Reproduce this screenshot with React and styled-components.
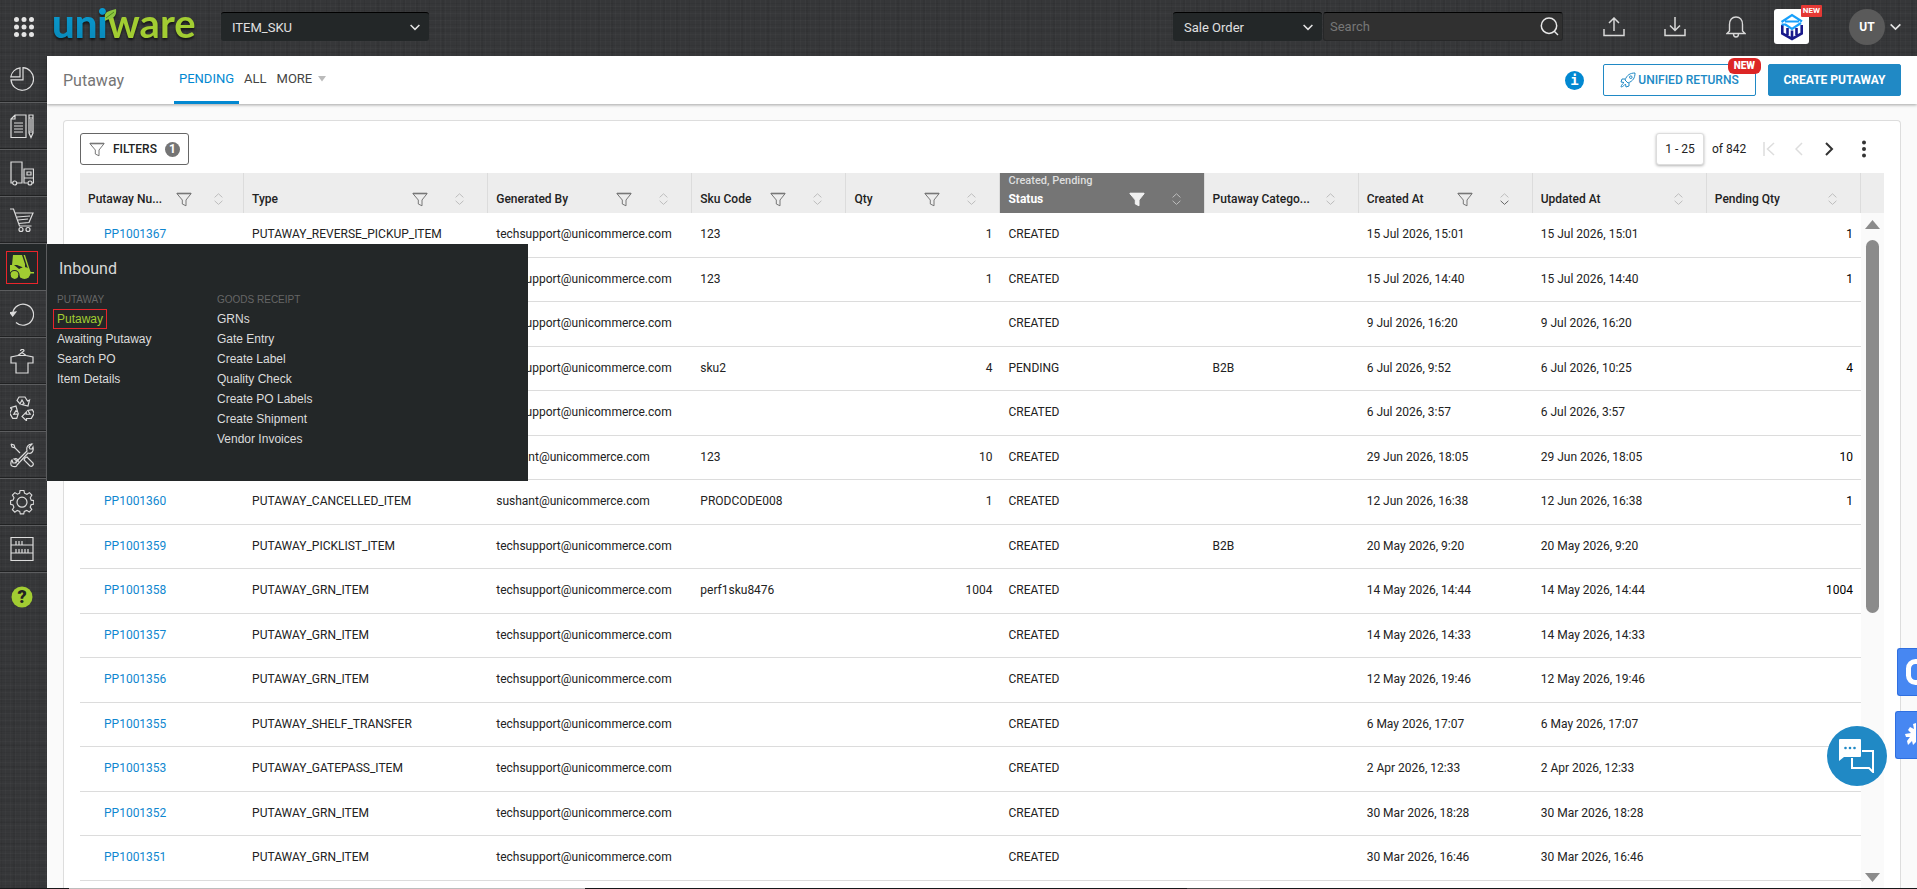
import styled, { createGlobalStyle, css } from "styled-components";

const GlobalStyle = createGlobalStyle`
  * {
    box-sizing: border-box;
  }

  body {
    margin: 0;
    overflow: hidden;
    font-family: Roboto, "Liberation Sans", sans-serif;
    font-size: 12px;
    color: #222;
    background-color: #37383a;
  }

  button, input, select {
    font-family: inherit;
    margin: 0;
  }

  a {
    text-decoration: none;
  }
`;

const AppStyled = styled.div`
  height: 100vh;
  display: flex;
  flex-direction: column;
  background-color: #363739;
  background-image: repeating-linear-gradient(0deg, rgba(255, 255, 255, 0.02) 0 1px, transparent 1px 3px, rgba(0, 0, 0, 0.05) 3px 4px, transparent 4px 7px),
    repeating-linear-gradient(0deg, rgba(0, 0, 0, 0.04) 0 2px, transparent 2px 11px),
    repeating-linear-gradient(90deg, rgba(255, 255, 255, 0.02) 0 1px, transparent 1px 5px),
    repeating-linear-gradient(90deg, rgba(0, 0, 0, 0.05) 0 2px, transparent 2px 13px);
`;

const TopBar = styled.header`
  flex: none;
  height: 56px;
  padding: 0 16px 3px 10px;
  display: flex;
  align-items: center;
`;

const IconButton = styled.button`
  width: ${(props) => props.$width || 30}px;
  height: ${(props) => props.$height || 32}px;
  padding: 0;
  border: none;
  background: none;
  color: ${(props) => props.$color || "#d8d8d8"};
  display: flex;
  align-items: center;
  justify-content: center;

  & svg {
    flex: none;
  }
`;

const Logo = styled.a`
  width: 148px;
  height: 50px;
  margin: 0 20px 0 15px;
`;

const SelectBox = styled.div`
  width: ${(props) => props.$width}px;
  height: 29px;
  display: grid;
  align-items: center;

  & select {
    grid-area: 1 / 1;
    width: 100%;
    height: 29px;
    padding: 0 32px 0 11px;
    appearance: none;
    border: none;
    border-top: 1px solid #000;
    border-radius: 3px;
    background-color: #232728;
    color: #e0e0e0;
    font-size: 13px;
  }

  & svg {
    grid-area: 1 / 1;
    justify-self: end;
    margin-right: 9px;
    pointer-events: none;
  }
`;

const SearchGroup = styled.form`
  margin-left: auto;
  display: flex;
  gap: 1px;
`;

const SearchBox = styled.div`
  width: 240px;
  height: 29px;
  display: flex;
  align-items: center;
  border: 1px solid #262728;
  border-top-color: #000;
  border-radius: 3px;
  background-color: #303030;

  & input {
    flex: 1;
    min-width: 0;
    padding: 0 6px;
    border: none;
    outline: none;
    background: none;
    color: #e0e0e0;
    font-size: 13px;
  }

  & input::placeholder {
    color: #777;
    opacity: 1;
  }
`;

const TopActions = styled.div`
  margin-left: 36px;
  display: flex;
  align-items: center;
  gap: 31px;
`;

const AppTile = styled.button`
  position: relative;
  width: 35px;
  height: 35px;
  margin-left: -8px;
  padding: 0;
  border: none;
  border-radius: 3px;
  background-color: #fff;
  display: grid;
  place-items: center;
`;

const TileBadge = styled.span`
  position: absolute;
  top: -4px;
  right: -13px;
  padding: 0 2px;
  border-radius: 1px;
  background-color: #e53935;
  color: #fff;
  font-size: 8px;
  font-weight: 700;
  line-height: 12px;
`;

const UserMenu = styled.button`
  margin-left: 9px;
  padding: 0;
  border: none;
  background: none;
  display: flex;
  align-items: center;
  gap: 5px;
  color: #e8e8e8;

  & span {
    width: 36px;
    border-radius: 50%;
    background-color: #5a5a5a;
    color: #fff;
    font-size: 12px;
    font-weight: 700;
    line-height: 36px;
  }
`;

const Body = styled.div`
  flex: 1;
  min-height: 0;
  display: flex;
`;

const SideBar = styled.nav`
  flex: none;
  width: 47px;
`;

const SideItem = styled.div`
  position: relative;
  height: 47px;
  padding-right: 4px;
  border-bottom: ${(props) => (props.$last ? "none" : "1px solid #5c5d5f")};
  box-shadow: ${(props) => (props.$last ? "none" : "inset 0 -1px 0 #202122")};
  display: flex;
  align-items: center;
  justify-content: center;

  ${(props) =>
    props.$active &&
    css`
      background-color: #232728;
      box-shadow: none;
      z-index: 2;
    `}
`;

const SideLink = styled.a`
  width: 32px;
  height: 33px;
  border: 1px solid ${(props) => (props.$active ? "#e8252b" : "transparent")};
  color: ${(props) => (props.$active ? "#a2cd32" : "#dcdcdc")};
  display: grid;
  place-items: center;
`;

const Flyout = styled.div`
  position: absolute;
  top: 0;
  left: 46px;
  width: 482px;
  height: 237px;
  padding: 15px 10px;
  border-left: 1px solid #5c5d5f;
  background-color: #232728;
  color: #d8d8d8;

  & h2 {
    margin: 0 2px 11px;
    font-size: 16px;
    font-weight: 400;
    line-height: 20px;
  }
`;

const FlyoutColumns = styled.div`
  display: grid;
  grid-template-columns: 160px 160px;
`;

const FlyoutColumn = styled.div`
  font-family: "Liberation Sans", Arial, sans-serif;

  & h3 {
    margin: 0;
    color: #666;
    font-size: 10px;
    font-weight: 400;
    line-height: 19px;
  }

  & ul {
    margin: 0;
    padding: 0;
    list-style: none;
  }
`;

const FlyoutLink = styled.a`
  display: block;
  width: fit-content;
  height: 20px;
  margin-left: -4px;
  padding: 0 3px;
  border: 1px solid ${(props) => (props.$active ? "#e8252b" : "transparent")};
  color: ${(props) => (props.$active ? "#a2cd32" : "#dcdcdc")};
  font-size: 12px;
  line-height: 18px;
`;

const Main = styled.main`
  flex: 1;
  min-width: 0;
  display: flex;
  flex-direction: column;
  background-color: #fafafa;
`;

const SubHeader = styled.div`
  flex: none;
  height: 48px;
  padding: 0 16px;
  background-color: #fff;
  box-shadow: 0 1px 3px rgba(0, 0, 0, 0.35);
  display: flex;
  align-items: center;

  & h1 {
    width: 111px;
    margin: 0;
    color: #757575;
    font-size: 16px;
    font-weight: 400;
  }
`;

const Tabs = styled.div`
  flex: 1;
  align-self: stretch;
  display: flex;
`;

const Tab = styled.button`
  padding: 0 5px;
  border: none;
  border-bottom: 3px solid ${(props) => (props.$active ? "#0288d1" : "transparent")};
  background: none;
  color: ${(props) => (props.$active ? "#0288d1" : "#444")};
  font-size: 13px;
  display: flex;
  align-items: center;
  gap: 6px;
`;

const HeaderActions = styled.div`
  display: flex;
  align-items: center;
  gap: 12px;
`;

const InfoButton = styled.button`
  width: 19px;
  height: 19px;
  margin-right: 7px;
  padding: 0;
  border: none;
  border-radius: 50%;
  background-color: #0288d1;
  color: #fff;
  font-family: "DejaVu Sans Mono", monospace;
  font-size: 14px;
  font-weight: 700;
  line-height: 19px;
`;

const ActionButton = styled.button`
  position: relative;
  min-width: ${(props) => (props.$primary ? 133 : 153)}px;
  height: 32px;
  padding: 0 14px;
  border: 1px solid #2089c5;
  border-radius: 2px;
  background-color: ${(props) => (props.$primary ? "#2089c5" : "#fff")};
  color: ${(props) => (props.$primary ? "#fff" : "#2089c5")};
  font-size: 12px;
  font-weight: ${(props) => (props.$primary ? 700 : 500)};
  white-space: nowrap;
  display: flex;
  align-items: center;
  justify-content: center;
  gap: 2px;
`;

const NewBadge = styled.span`
  position: absolute;
  top: -7px;
  right: -6px;
  padding: 0 6px;
  border-radius: 6px;
  background-color: #dc2626;
  color: #fff;
  font-size: 10px;
  font-weight: 900;
  line-height: 16px;
`;

const Card = styled.section`
  flex: 1;
  min-height: 0;
  margin: 16px 16px 0;
  padding: 12px 16px 0;
  border: 1px solid #ddd;
  border-bottom: none;
  border-radius: 4px 4px 0 0;
  background-color: #fff;
  display: flex;
  flex-direction: column;
`;

const Toolbar = styled.div`
  flex: none;
  height: 40px;
  display: flex;
  align-items: flex-start;
  justify-content: space-between;
`;

const FilterButton = styled.button`
  height: 32px;
  padding: 0 8px;
  border: 1px solid #666;
  border-radius: 3px;
  background-color: #fff;
  color: #222;
  font-size: 12px;
  font-weight: 500;
  display: flex;
  align-items: center;
  gap: 8px;

  & b {
    width: 15px;
    border-radius: 50%;
    background-color: #757575;
    color: #fff;
    line-height: 15px;
  }
`;

const Pager = styled.div`
  display: flex;
  align-items: center;
`;

const RangeButton = styled.button`
  width: 48px;
  height: 32px;
  margin-right: 8px;
  padding: 0;
  border: 1px solid #ddd;
  border-radius: 3px;
  background-color: #fff;
  color: #222;
  font-size: 12px;
  box-shadow: 0 1px 3px rgba(0, 0, 0, 0.3);
`;

const PageTotal = styled.span`
  width: 42px;
`;

const GridArea = styled.div`
  flex: 1;
  min-height: 0;
  overflow: hidden;
  display: flex;
  align-items: stretch;
`;

const TableArea = styled.div`
  flex: 1;
  min-width: 0;
  overflow: hidden;
`;

const Table = styled.table`
  width: 100%;
  table-layout: fixed;
  border-collapse: separate;
  border-spacing: 0;
`;

const HeadCell = styled.th`
  height: 40px;
  padding: 0 ${(props) => (props.$compact ? 20 : 23)}px 0 8px;
  border-right: 1px solid #dcdcdc;
  background-color: ${(props) => (props.$filtered ? "#757575" : "#ededed")};
  color: ${(props) => (props.$filtered ? "#fff" : "#222")};
  font-weight: ${(props) => (props.$filtered ? 700 : 500)};
  text-align: left;
  white-space: nowrap;
  vertical-align: bottom;

  & small {
    display: block;
    color: #dedede;
    font-size: 11px;
    font-weight: 500;
    line-height: 12px;
  }
`;

const HeadContent = styled.div`
  height: 24px;
  margin-bottom: 2px;
  display: flex;
  align-items: center;

  & span {
    flex: 1;
    min-width: 0;
  }

  & svg {
    flex: none;
    margin-left: ${(props) => (props.$compact ? 22 : 27)}px;
  }

  & svg:first-of-type {
    margin-left: 0;
  }
`;

const Row = styled.tr`
  height: ${(props) => (props.$tall ? 45 : 44)}px;
`;

const Cell = styled.td`
  padding: 0 8px 2px;
  border-bottom: 1px solid #dcdcdc;
  color: ${(props) => (props.$strong ? "#000" : "#222")};
  text-align: ${(props) => (props.$number ? "right" : "left")};
  white-space: nowrap;

  & a {
    padding-left: 16px;
    color: #0f87d0;
  }
`;

const ScrollBar = styled.div`
  flex: none;
  width: 23px;
  padding: 7px 0;
  border-top: 40px solid #ededed;
  background-color: #fafafa;
  display: flex;
  flex-direction: column;
  align-items: center;
`;

const ScrollArrow = styled.div`
  width: 15px;
  height: 9px;
  background-color: #8b8b8b;
  clip-path: ${(props) => (props.$down ? "polygon(0 0, 100% 0, 50% 100%)" : "polygon(50% 0, 100% 100%, 0 100%)")};
`;

const ScrollTrack = styled.div`
  flex: 1;
  width: 13px;
  margin: 11px 0;
`;

const ScrollThumb = styled.div`
  height: 60%;
  border-radius: 7px;
  background-color: #8b8b8b;
`;

const ChatButton = styled.button`
  position: fixed;
  right: 30px;
  bottom: 103px;
  z-index: 3;
  width: 60px;
  height: 60px;
  padding: 0;
  border: none;
  border-radius: 50%;
  background-color: #2089c5;
  display: grid;
  place-items: center;
`;

const EdgeTabs = styled.div`
  position: fixed;
  right: 0;
  bottom: 130px;
  z-index: 3;
  display: flex;
  flex-direction: column;
  align-items: flex-end;
  gap: 15px;
`;

const EdgeTab = styled.button`
  width: ${(props) => props.$width}px;
  height: 48px;
  padding: 0;
  border: 1px solid #2f6fe0;
  border-right: none;
  border-radius: 3px 0 0 3px;
  background-color: #4787f2;
  overflow: hidden;

  & svg {
    display: block;
    margin-left: 8px;
  }
`;

const BottomEdge = styled.div`
  position: fixed;
  left: 0;
  right: 0;
  bottom: 0;
  z-index: 4;
  height: 1px;
  background: linear-gradient(90deg, #17181a 0 69px, #bdbdbd 69px 585px, #17181a 585px 1187px, #484848 1187px 1260px, #17181a 1260px);
`;

const Chevron = ({ size = 10 }) => (
  <svg width={size} height={size} viewBox="0 0 10 10" fill="none" stroke="#e4e4e4" strokeWidth="1.5">
    <path d="M.6 3 5 7.4 9.4 3" />
  </svg>
);

const Funnel = ({ filled }) => (
  <svg width="16" height="15" viewBox="0 0 16 15" fill={filled ? "#f0f0f0" : "none"} stroke={filled ? "#f0f0f0" : "#777"}>
    <path d="M.8 1.5h14.4L10 8v5.8L6.3 12V8z" />
    <path d="M1 1.5h14" strokeWidth="1.6" />
  </svg>
);

const SortIcon = ({ desc }) => (
  <svg width="9" height="12" viewBox="0 0 9 12" fill="none" stroke="#bdbdbd">
    <path d="M.6 4.4 4.5.8l3.9 3.6" />
    <path d="M.6 7.8l3.9 3.6 3.9-3.6" stroke={desc ? "#666" : "#bdbdbd"} />
  </svg>
);

const recycleArrow = "M7 4.500 9 1h6l2.500 4 2-1-1.500 6-6-1.500 2-1-2-3.500-2 4z";

const navIcons = {
  Dashboard: (
    <>
      <path d="M13 .7a11.3 11.3 0 1 1-12 12.2h12z" />
      <path d="M10 .8v9H.8A11 11 0 0 1 10 .8z" />
    </>
  ),
  Orders: (
    <>
      <path d="M5 1h11v22.5H1V5zM5 1v4H1M4 9h9M4 12h9M4 15h9M4 18h9" />
      <path d="M19 1h4v18l-2 4.5-2-4.5zM19 4h4M19 18h4M21 5v12" />
    </>
  ),
  Products: (
    <>
      <path d="M2.500 22H1V1h11v21H7" />
      <circle cx="4.7" cy="22" r="2" />
      <path d="M17.500 22H14V8h9.500v14H22M17 11h4v3h-4zM14 17h9" />
      <circle cx="20" cy="22" r="2" />
    </>
  ),
  Procure: (
    <>
      <path d="M0 1h3.500l6 17h12M4.500 5H23l-4 9.500-10.500 1M7 9l13-1M8 12l10-1" />
      <circle cx="11" cy="21.500" r="2" />
      <circle cx="18" cy="21.500" r="2" />
    </>
  ),
  Inbound: (
    <g fill="currentColor" stroke="none">
      <path d="M3 0h9l3 9v4l-3-1-5-2H2z" />
      <path d="M13.500 0h1.500l5.500 17H24v1.500h-4.500z" />
      <path d="M0 10h4l5 4 5-2 3 5v3H0z" />
      <circle cx="4.500" cy="20" r="4" />
      <circle cx="14.500" cy="18" r="6" />
      <circle cx="4.500" cy="20" r="4.500" fill="none" stroke="#232728" />
    </g>
  ),
  Returns: (
    <>
      <path d="M2.700 11A10.500 10.500 0 1 1 6 20.500" />
      <path d="M0 10.500 2.700 14 5.800 10z" fill="currentColor" />
    </>
  ),
  Inventory: <path d="M8 6.500 1 8v6h5V24h12V14h5V8l-7-1.500-4-3-4 3h8M12 4c0-2 2-1 2-2.500S10.500 0 10.500 2" />,
  Recycle: (
    <>
      <path d={recycleArrow} />
      <path d={recycleArrow} transform="rotate(120 12 13.500)" />
      <path d={recycleArrow} transform="rotate(240 12 13.500)" />
    </>
  ),
  Tools: (
    <>
      <path d="M5 20 17 8c-1-4 1-7 5-7l-3 3 1 2h2l1-2c1 5-2 7-5 6L7 22c0 2-3 2-5 1s-1-5 0-6l1 3h3l1-2-3-2c3-1 5 1 4 3" />
      <path d="M1 1l3 1 1 3 5 5M1 1l1 3 3 1M15 15l2-1 6 6c1 2-1 4-3 3l-6-6z" />
    </>
  ),
  Settings: (
    <>
      <path d="m10 1 4 0 .6 3 2.600 1.100 2.600-1.700 2.600 2.600-1.700 2.800 1 2.500 2.700.5v3.700l-2.800.7-1 2.500 1.700 2.500-2.700 2.600-2.600-1.700-2.600 1-.6 2.700h-3.600l-.6-2.700-2.600-1L4.500 24 1.900 21.300l1.600-2.500-1-2.500L0 15.600v-3.700l2.600-.6 1-2.500L1.900 6l2.600-2.600L7.200 5 9.500 4z" transform="translate(.6 -.6) scale(.95)" />
      <circle cx="12" cy="12.200" r="5" />
    </>
  ),
  Reports: <path d="M1 .5h22v23H1zM1 8h22M1 16h22M6 4v4M9 4v4M12 4v4M6 12v4M9 12v4M12 12v4M15 12v4M18 12v4" />,
};

const inboundMenu = [
  { title: "PUTAWAY", links: ["Putaway", "Awaiting Putaway", "Search PO", "Item Details"] },
  {
    title: "GOODS RECEIPT",
    links: ["GRNs", "Gate Entry", "Create Label", "Quality Check", "Create PO Labels", "Create Shipment", "Vendor Invoices"],
  },
];

const columns = [
  { name: "Putaway Nu...", width: 164, filter: true, compact: true },
  { name: "Type", width: 244, filter: true },
  { name: "Generated By", width: 204, filter: true },
  { name: "Sku Code", width: 154, filter: true },
  { name: "Qty", width: 154, filter: true },
  { name: "Status", width: 204, filter: true, applied: "Created, Pending" },
  { name: "Putaway Catego...", width: 154 },
  { name: "Created At", width: 174, filter: true, desc: true },
  { name: "Updated At", width: 174 },
  { name: "Pending Qty", width: 154 },
];

const tech = "techsupport@unicommerce.com";
const sushant = "sushant@unicommerce.com";

// code, type, generated by, sku, qty, status, category, created, updated, pending qty
const rows = [
  ["PP1001367", "PUTAWAY_REVERSE_PICKUP_ITEM", tech, "123", "1", "CREATED", "", "15 Jul 2026, 15:01", "15 Jul 2026, 15:01", "1"],
  ["PP1001366", "PUTAWAY_REVERSE_PICKUP_ITEM", tech, "123", "1", "CREATED", "", "15 Jul 2026, 14:40", "15 Jul 2026, 14:40", "1"],
  ["PP1001365", "PUTAWAY_GRN_ITEM", tech, "", "", "CREATED", "", "9 Jul 2026, 16:20", "9 Jul 2026, 16:20", ""],
  ["PP1001364", "PUTAWAY_GRN_ITEM", tech, "sku2", "4", "PENDING", "B2B", "6 Jul 2026, 9:52", "6 Jul 2026, 10:25", "4"],
  ["PP1001363", "PUTAWAY_GRN_ITEM", tech, "", "", "CREATED", "", "6 Jul 2026, 3:57", "6 Jul 2026, 3:57", ""],
  ["PP1001361", "PUTAWAY_GRN_ITEM", sushant, "123", "10", "CREATED", "", "29 Jun 2026, 18:05", "29 Jun 2026, 18:05", "10"],
  ["PP1001360", "PUTAWAY_CANCELLED_ITEM", sushant, "PRODCODE008", "1", "CREATED", "", "12 Jun 2026, 16:38", "12 Jun 2026, 16:38", "1"],
  ["PP1001359", "PUTAWAY_PICKLIST_ITEM", tech, "", "", "CREATED", "B2B", "20 May 2026, 9:20", "20 May 2026, 9:20", ""],
  ["PP1001358", "PUTAWAY_GRN_ITEM", tech, "perf1sku8476", "1004", "CREATED", "", "14 May 2026, 14:44", "14 May 2026, 14:44", "1004"],
  ["PP1001357", "PUTAWAY_GRN_ITEM", tech, "", "", "CREATED", "", "14 May 2026, 14:33", "14 May 2026, 14:33", ""],
  ["PP1001356", "PUTAWAY_GRN_ITEM", tech, "", "", "CREATED", "", "12 May 2026, 19:46", "12 May 2026, 19:46", ""],
  ["PP1001355", "PUTAWAY_SHELF_TRANSFER", tech, "", "", "CREATED", "", "6 May 2026, 17:07", "6 May 2026, 17:07", ""],
  ["PP1001353", "PUTAWAY_GATEPASS_ITEM", tech, "", "", "CREATED", "", "2 Apr 2026, 12:33", "2 Apr 2026, 12:33", ""],
  ["PP1001352", "PUTAWAY_GRN_ITEM", tech, "", "", "CREATED", "", "30 Mar 2026, 18:28", "30 Mar 2026, 18:28", ""],
  ["PP1001351", "PUTAWAY_GRN_ITEM", tech, "", "", "CREATED", "", "30 Mar 2026, 16:46", "30 Mar 2026, 16:46", ""],
];

function Header() {
  return (
    <TopBar>
      <IconButton $width={28} aria-label="Apps">
        <svg width="20" height="20" viewBox="0 0 20 20" fill="#e4e4e4">
          {[2.5, 10, 17.5].map((y) => [2.5, 10, 17.5].map((x) => <circle key={`${x}-${y}`} cx={x} cy={y} r="2.5" />))}
        </svg>
      </IconButton>
      <Logo href="#" aria-label="uniware">
        <svg width="148" height="50" viewBox="0 0 148 50">
          <defs>
            <linearGradient id="logoBlue" x1="0" y1="0" x2="0" y2="1">
              <stop offset="0" stopColor="#08a0d8" />
              <stop offset="1" stopColor="#0a86b4" />
            </linearGradient>
          </defs>
          <g fontFamily="Lato, sans-serif" fontSize="40" fontWeight="900" style={{ filter: "drop-shadow(0 2px 1px rgba(0,0,0,.6))" }}>
            <text x="-1" y="36">
              <tspan fill="url(#logoBlue)">uni</tspan>
              <tspan fill="#a2cd32" fontWeight="700">ware</tspan>
            </text>
            <path d="M52 16C51 10 55 9 63 7c1 6-2 9-6 10-3 1-4 1-5 2z" fill="#8cc63f" />
            <path d="M53 16 61 10" stroke="#4f8a1d" fill="none" />
          </g>
        </svg>
      </Logo>
      <SelectBox $width={208}>
        <select aria-label="Facility" defaultValue="ITEM_SKU">
          <option>ITEM_SKU</option>
        </select>
        <Chevron />
      </SelectBox>

      <SearchGroup>
        <SelectBox $width={149}>
          <select aria-label="Search type" defaultValue="Sale Order">
            <option>Sale Order</option>
          </select>
          <Chevron />
        </SelectBox>
        <SearchBox>
          <input type="text" aria-label="Search" placeholder="Search" />
          <IconButton $width={26} $height={26} aria-label="Run search">
            <svg width="19" height="19" viewBox="0 0 19 19" fill="none" stroke="#e8e8e8" strokeWidth="1.500">
              <circle cx="9" cy="8.700" r="7.700" />
              <path d="m14 14 4 4" />
            </svg>
          </IconButton>
        </SearchBox>
      </SearchGroup>

      <TopActions>
        <IconButton aria-label="Imports">
          <svg width="22" height="20" viewBox="0 0 22 20" fill="none" stroke="currentColor" strokeWidth="1.500">
            <path d="M1 12v6.500h20V12M11 14V1M6 6l5-5 5 5" />
          </svg>
        </IconButton>
        <IconButton aria-label="Exports">
          <svg width="22" height="20" viewBox="0 0 22 20" fill="none" stroke="currentColor" strokeWidth="1.500">
            <path d="M1 12v6.500h20V12M11 0v13M6 8.500l5 5 5-5" />
          </svg>
        </IconButton>
        <IconButton aria-label="Notifications">
          <svg width="20" height="22" viewBox="0 0 20 22" fill="none" stroke="currentColor" strokeWidth="1.400">
            <path d="M3.500 15V8.500C3.500 4 6 1 10 1s6.500 3 6.500 7.500V15l2.500 2.500H1zM7.500 18c0 4 5 4 5 0" />
          </svg>
        </IconButton>
        <AppTile aria-label="New apps">
          <svg width="24" height="28" viewBox="0 0 24 28" fill="none" strokeWidth="2.600">
            <path d="M2.300 12v8.500L12 26l9.700-5.500V12M12 26v-8.500M7.500 15v7M16.500 15v7" stroke="#1a1a8c" />
            <path d="M1.500 11.500h4L12 16l9-6M1.500 9 12 2l10 6.500M5 8.500h14" stroke="#18a0fb" strokeWidth="2.200" />
          </svg>
          <TileBadge>NEW</TileBadge>
        </AppTile>
        <UserMenu aria-label="User menu">
          <span>UT</span>
          <Chevron size={11} />
        </UserMenu>
      </TopActions>
    </TopBar>
  );
}

function InboundFlyout() {
  return (
    <Flyout>
      <h2>Inbound</h2>
      <FlyoutColumns>
        {inboundMenu.map((group) => (
          <FlyoutColumn key={group.title}>
            <h3>{group.title}</h3>
            <ul>
              {group.links.map((link) => (
                <li key={link}>
                  <FlyoutLink href="#" $active={link === "Putaway"}>
                    {link}
                  </FlyoutLink>
                </li>
              ))}
            </ul>
          </FlyoutColumn>
        ))}
      </FlyoutColumns>
    </Flyout>
  );
}

function Navigation() {
  return (
    <SideBar>
      {Object.keys(navIcons).map((name) => (
        <SideItem key={name} $active={name === "Inbound"}>
          <SideLink href="#" aria-label={name} $active={name === "Inbound"}>
            <svg width="24" height="25" viewBox="0 0 24 25" fill="none" stroke="currentColor" strokeWidth="1.200">
              {navIcons[name]}
            </svg>
          </SideLink>
          {name === "Inbound" && <InboundFlyout />}
        </SideItem>
      ))}
      <SideItem $last>
        <SideLink href="#" aria-label="Help">
          <svg width="22" height="22" viewBox="0 0 22 22">
            <circle cx="11" cy="11" r="10.500" fill="#a2cd32" />
            <text x="11" y="17" textAnchor="middle" fontFamily="Roboto" fontSize="18" fontWeight="900" fill="#222">
              ?
            </text>
          </svg>
        </SideLink>
      </SideItem>
    </SideBar>
  );
}

function PutawayTable() {
  return (
    <Table>
      <colgroup>
        {columns.map((column) => (
          <col key={column.name} style={{ width: `${(column.width / 1780) * 100}%` }} />
        ))}
      </colgroup>
      <thead>
        <tr>
          {columns.map((column) => (
            <HeadCell key={column.name} $filtered={!!column.applied} $compact={column.compact}>
              {column.applied && <small>{column.applied}</small>}
              <HeadContent $compact={column.compact}>
                <span>{column.name}</span>
                {column.filter && <Funnel filled={!!column.applied} />}
                <SortIcon desc={column.desc} />
              </HeadContent>
            </HeadCell>
          ))}
        </tr>
      </thead>
      <tbody>
        {rows.map((row, index) => (
          <Row key={row[0]} $tall={index % 2 === 0}>
            {row.map((value, i) => (
              <Cell key={columns[i].name} $number={i === 4 || i === 9} $strong={i === 9}>
                {i === 0 ? <a href="#">{value}</a> : value}
              </Cell>
            ))}
          </Row>
        ))}
      </tbody>
    </Table>
  );
}

function App() {
  return (
    <AppStyled>
      <GlobalStyle />
      <Header />
      <Body>
        <Navigation />
        <Main>
          <SubHeader>
            <h1>Putaway</h1>
            <Tabs>
              <Tab $active>PENDING</Tab>
              <Tab>ALL</Tab>
              <Tab>
                MORE
                <svg width="8" height="6" viewBox="0 0 8 6">
                  <path d="M0 0h8L4 5.500z" fill="#bbb" />
                </svg>
              </Tab>
            </Tabs>
            <HeaderActions>
              <InfoButton aria-label="Information">i</InfoButton>
              <ActionButton>
                <svg width="16" height="16" viewBox="0 0 16 16" fill="none" stroke="currentColor">
                  <path d="M5 8C7 3 10 1 15 1c0 5-2 8-7 10zM5 7H2L1 10l3 .5M9 11v3l-3 1-.5-3M3.500 11.500C1.500 12 1 15 1 15s3-.5 3.500-2.500" />
                  <circle cx="10.800" cy="5.200" r="1.300" />
                </svg>
                UNIFIED RETURNS
                <NewBadge>NEW</NewBadge>
              </ActionButton>
              <ActionButton $primary>CREATE PUTAWAY</ActionButton>
            </HeaderActions>
          </SubHeader>

          <Card>
            <Toolbar>
              <FilterButton>
                <Funnel />
                FILTERS
                <b>1</b>
              </FilterButton>
              <Pager>
                <RangeButton>1 - 25</RangeButton>
                <PageTotal>of 842</PageTotal>
                <IconButton $color="#ddd" aria-label="First page" disabled>
                  <svg width="12" height="14" viewBox="0 0 12 14" fill="none" stroke="currentColor" strokeWidth="1.500">
                    <path d="M1 0v14M11 1 4.500 7l6.500 6" />
                  </svg>
                </IconButton>
                <IconButton $color="#ddd" aria-label="Previous page" disabled>
                  <svg width="8" height="14" viewBox="0 0 8 14" fill="none" stroke="currentColor" strokeWidth="1.500">
                    <path d="M7 1 1 7l6 6" />
                  </svg>
                </IconButton>
                <IconButton $color="#333" aria-label="Next page">
                  <svg width="9" height="14" viewBox="0 0 9 14" fill="none" stroke="currentColor" strokeWidth="2">
                    <path d="m1 1 6 6-6 6" />
                  </svg>
                </IconButton>
                <IconButton $color="#333" $width={40} aria-label="More options">
                  <svg width="4" height="18" viewBox="0 0 4 18" fill="currentColor">
                    <circle cx="2" cy="2.500" r="2" />
                    <circle cx="2" cy="9" r="2" />
                    <circle cx="2" cy="15.500" r="2" />
                  </svg>
                </IconButton>
              </Pager>
            </Toolbar>
            <GridArea>
              <TableArea>
                <PutawayTable />
              </TableArea>
              <ScrollBar>
                <ScrollArrow />
                <ScrollTrack>
                  <ScrollThumb />
                </ScrollTrack>
                <ScrollArrow $down />
              </ScrollBar>
            </GridArea>
          </Card>
        </Main>
      </Body>

      <EdgeTabs>
        <EdgeTab $width={20} aria-label="Feedback">
          <svg width="20" height="26" viewBox="0 0 20 26" fill="none" stroke="#fff" strokeWidth="5">
            <rect x="2.500" y="2.500" width="15" height="21" rx="7" />
          </svg>
        </EdgeTab>
        <EdgeTab $width={22} aria-label="Shortcuts">
          <svg width="24" height="24" viewBox="0 0 24 24" fill="#fff">
            <path d="m12 0-3 1 1 5-4-2-2 3 3 3-6 1 1 3 4 0-3 4 1 4 4-4 1 4 3-3V0z" />
          </svg>
        </EdgeTab>
      </EdgeTabs>
      <ChatButton aria-label="Chat">
        <svg width="36" height="34" viewBox="0 0 36 34">
          <path d="M1 0h20q1 0 1 1v16q0 1-1 1H5l-5 4V1q0-1 1-1z" fill="#fff" />
          <path d="M23 12h11v21l-4-4H13V19" fill="none" stroke="#fff" strokeWidth="2" />
          <g fill="#2089c5">
            <circle cx="6.500" cy="9" r="1.300" />
            <circle cx="11" cy="9" r="1.300" />
            <circle cx="15.500" cy="9" r="1.300" />
          </g>
        </svg>
      </ChatButton>
      <BottomEdge />
    </AppStyled>
  );
}

export default App;
